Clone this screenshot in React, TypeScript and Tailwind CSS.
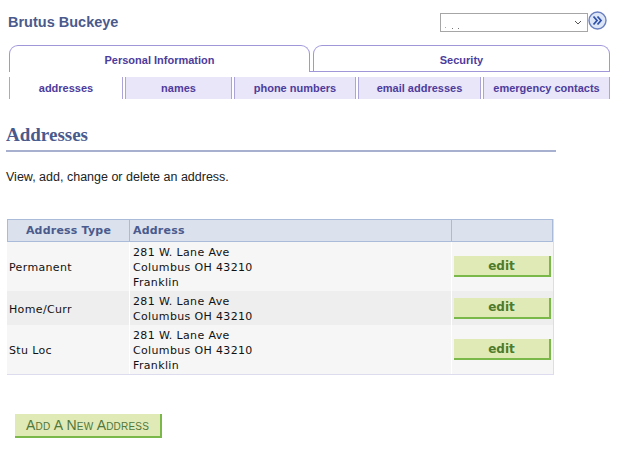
import React from "react";

interface AddressRow {
  type: string;
  lines: string[];
  shade: string;
}

const rows: AddressRow[] = [
  { type: "Permanent", lines: ["281 W. Lane Ave", "Columbus OH 43210", "Franklin"], shade: "bg-[#f6f6f6]" },
  { type: "Home/Curr", lines: ["281 W. Lane Ave", "Columbus OH 43210"], shade: "bg-[#eeeeee]" },
  { type: "Stu Loc", lines: ["281 W. Lane Ave", "Columbus OH 43210", "Franklin"], shade: "bg-[#f6f6f6]" },
];

const subTabs = [
  { label: "addresses", w: "w-[112px]", active: true },
  { label: "names", w: "w-[105px]", active: false },
  { label: "phone numbers", w: "w-[120px]", active: false },
  { label: "email addresses", w: "w-[121px]", active: false },
  { label: "emergency contacts", w: "flex-1", active: false },
];

const GoIcon = () => (
  <svg width="19" height="19" viewBox="0 0 19 19">
    <circle cx="9.5" cy="9.5" r="8.5" fill="#dce6f7" stroke="#6a7fbf" strokeWidth="1.4" />
    <path d="M5.5 5.5 L9 9.5 L5.5 13.5 M9.5 5.5 L13 9.5 L9.5 13.5" fill="none" stroke="#2f4fa8" strokeWidth="1.8" />
  </svg>
);

const Separator = () => (
  <div className="w-[4px] h-full border-l border-r border-[#aaa4d9] bg-white" />
);

export default function App() {
  return (
    <div className="w-[640px] h-[454px] bg-white font-['Liberation_Sans',Arial,sans-serif] overflow-hidden">
      {/* header */}
      <div className="flex items-center justify-between pl-[8px] pr-[33px] pt-[10px] h-[31px]">
        <h1 className="text-[14.5px] font-bold text-[#4a5a8c] leading-none mt-[3px]">Brutus Buckeye</h1>
        <div className="flex items-center">
          <div className="relative w-[148px] h-[19px] border border-[#a6a6a6] bg-white mt-[3px]">
            <span className="absolute left-[4px] bottom-[3px] w-[1px] h-[1px] bg-[#f0a030]" />
            <span className="absolute left-[11px] bottom-[2px] w-[1px] h-[1px] bg-[#777]" />
            <span className="absolute left-[17px] bottom-[2px] w-[1px] h-[1px] bg-[#777]" />
            <svg className="absolute right-[5px] top-[6px]" width="8" height="6" viewBox="0 0 8 6">
              <path d="M1 1 L4 4 L7 1" fill="none" stroke="#555" strokeWidth="1" />
            </svg>
          </div>
          <GoIcon />
        </div>
      </div>

      {/* main tabs */}
      <div className="flex ml-[9px] w-[601px] mt-[14px] h-[27px]">
        <div className="w-[301px] h-full border-t border-l border-r border-[#9f97d8] rounded-t-[9px] flex items-center justify-center pt-[3px]">
          <span className="text-[11px] font-bold text-[#4e3c9c]">Personal Information</span>
        </div>
        <div className="flex-1 h-full border-b border-[#9f97d8] pl-[3px]">
          <div className="h-full border-t border-l border-r border-[#9f97d8] rounded-t-[9px] flex items-center justify-center pt-[3px]">
            <span className="text-[11px] font-bold text-[#4e3c9c]">Security</span>
          </div>
        </div>
      </div>

      {/* sub tabs */}
      <div className="flex ml-[9px] w-[601px] mt-[5px] h-[22px] border-l border-r border-[#aaa4d9]">
        {subTabs.map((t, i) => (
          <React.Fragment key={t.label}>
            {i > 0 && <Separator />}
            <div
              className={`${t.w} h-full flex items-center justify-center pt-[1px] ${t.active ? "bg-white" : "bg-[#e8e6f8]"}`}
            >
              <span className="text-[11px] font-bold text-[#4e3c9c]">{t.label}</span>
            </div>
          </React.Fragment>
        ))}
      </div>

      {/* page heading */}
      <div className="mx-[6px] w-[550px] mt-[25px] border-b-2 border-[#a7b1cf] pb-[5px]">
        <h2 className="font-['Liberation_Serif',serif] font-bold text-[19px] leading-[20px] text-[#4a5a8c] pt-[1px]">Addresses</h2>
      </div>
      <p className="ml-[6px] mt-[18px] text-[12.5px] leading-[14px] text-[#222]">View, add, change or delete an address.</p>

      {/* table */}
      <div className="ml-[7px] w-[547px] mt-[35px] font-['DejaVu_Sans',Verdana,sans-serif] border-r border-b border-[#dcdcee]">
        <div className="flex h-[23px] bg-[#dbe2ee] border border-[#a9bbd8] text-[11px] font-bold text-[#4a5a8c] tracking-[0.2px]">
          <div className="w-[122px] flex items-center justify-center border-r border-[#a9bbd8] pt-[2px]">Address Type</div>
          <div className="w-[322px] flex items-center pl-[3px] border-r border-[#a9bbd8] pt-[2px]">Address</div>
          <div className="flex-1" />
        </div>
        {rows.map((r) => (
          <div key={r.type} className={`flex ${r.shade} text-[11px] leading-[15px] text-[#111] tracking-[0.35px]`}>
            <div className="w-[123px] flex items-center pl-[2px] pt-[3px] pb-[1px] border-r border-white">{r.type}</div>
            <div className="w-[322px] pl-[3px] pt-[3px] pb-[1px] border-r border-white">
              {r.lines.map((l) => (
                <div key={l}>{l}</div>
              ))}
            </div>
            <div className="flex-1 flex items-center pl-[2px]">
              <button className="w-[97px] h-[21px] bg-[#dfeab7] border-r-2 border-b-2 border-[#7ab84a] text-[12px] font-bold text-[#4d7a2c] leading-none tracking-normal">
                edit
              </button>
            </div>
          </div>
        ))}
      </div>

      <button className="ml-[15px] mt-[39px] w-[147px] h-[24px] bg-[#dfeab7] border-r-2 border-b-2 border-[#7ab84a] text-[14px] text-[#52763a] [font-variant-caps:small-caps] tracking-[0.2px] leading-none">
        Add A New Address
      </button>
    </div>
  );
}
